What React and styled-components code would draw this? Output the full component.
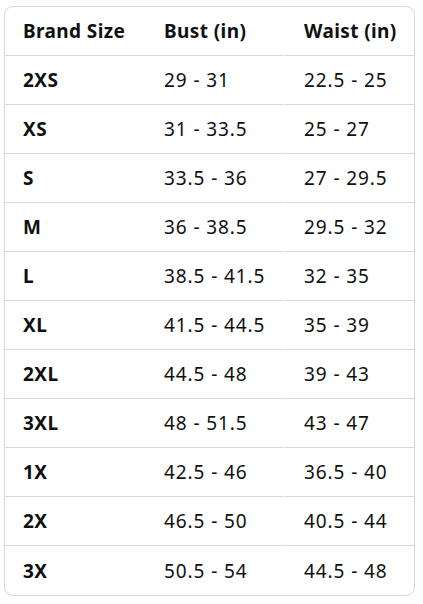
import React from "react";
import styled, { createGlobalStyle } from "styled-components";

const Global = createGlobalStyle`
  html, body { margin: 0; padding: 0; background: #fff; }
  body { font-family: "Noto Sans", "Liberation Sans", sans-serif; color: #0f1111; }
`;

const Page = styled.div`
  padding: 6px 8px 0 4px;
`;

const Table = styled.div`
  width: 411px;
  box-sizing: border-box;
  border: 1px solid #d5d9d9;
  border-radius: 9px;
  display: grid;
  grid-template-columns: 140px 139px 130px;
  overflow: hidden;
`;

const Cell = styled.div`
  height: 49px;
  box-sizing: border-box;
  display: flex;
  align-items: center;
  padding-left: ${(p) => (p.$col === 0 ? 18 : 19)}px;
  margin-left: ${(p) => (p.$col === 2 ? 1 : 0)}px;
  border-bottom: ${(p) => (p.$last ? "none" : "1px solid #d5d9d9")};
  font-size: 19px;
  letter-spacing: ${(p) => (p.$bold ? 0.4 : 0.9)}px;
  font-weight: ${(p) => (p.$bold ? 700 : 400)};
  white-space: nowrap;
`;

const rows = [
  ["2XS", "29 - 31", "22.5 - 25"],
  ["XS", "31 - 33.5", "25 - 27"],
  ["S", "33.5 - 36", "27 - 29.5"],
  ["M", "36 - 38.5", "29.5 - 32"],
  ["L", "38.5 - 41.5", "32 - 35"],
  ["XL", "41.5 - 44.5", "35 - 39"],
  ["2XL", "44.5 - 48", "39 - 43"],
  ["3XL", "48 - 51.5", "43 - 47"],
  ["1X", "42.5 - 46", "36.5 - 40"],
  ["2X", "46.5 - 50", "40.5 - 44"],
  ["3X", "50.5 - 54", "44.5 - 48"],
];

export default function App() {
  const header = ["Brand Size", "Bust (in)", "Waist (in)"];
  return (
    <>
      <Global />
      <Page>
        <Table>
          {header.map((h, i) => (
            <Cell key={h} $col={i} $bold>
              {h}
            </Cell>
          ))}
          {rows.map((r, ri) =>
            r.map((v, ci) => (
              <Cell key={ri + "-" + ci} $col={ci} $bold={ci === 0} $last={ri === rows.length - 1}>
                {v}
              </Cell>
            ))
          )}
        </Table>
      </Page>
    </>
  );
}
